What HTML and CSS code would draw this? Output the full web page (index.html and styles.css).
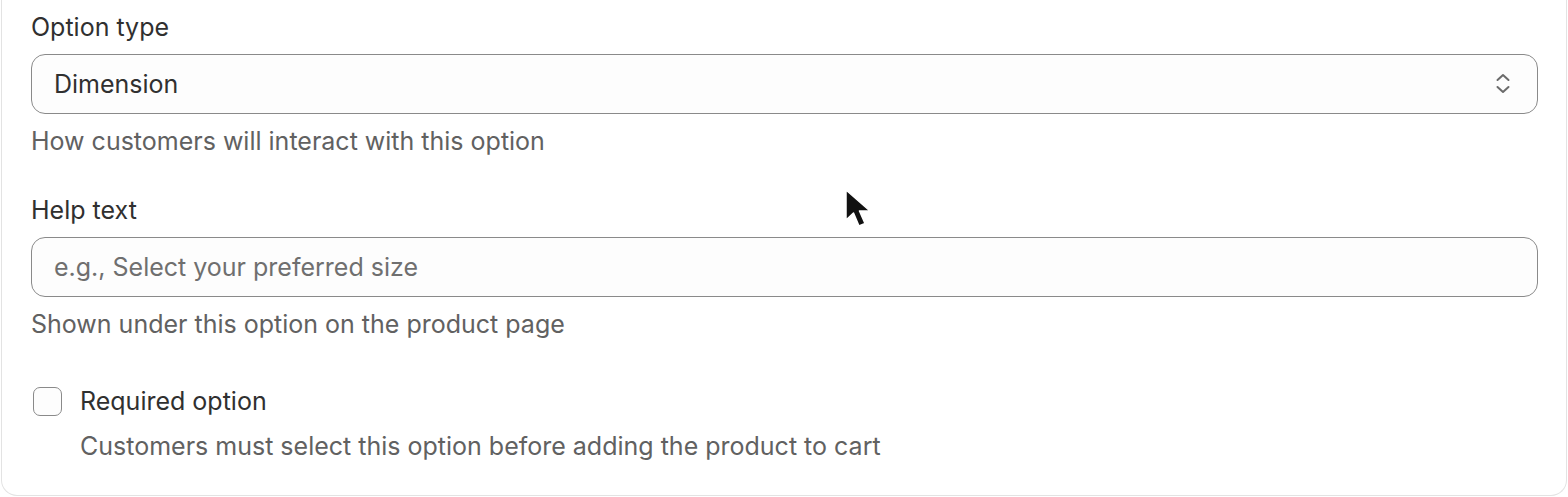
FILE: index.html
```html
<!DOCTYPE html>
<html lang="en">
<head>
  <meta charset="UTF-8">
  <meta name="viewport" content="width=device-width, initial-scale=1.0">
  <title>Option settings</title>
  <link rel="stylesheet" href="styles.css">
</head>
<body>

  <div class="card">
    <div class="field">
      <label class="field-label" for="option-type">Option type</label>
      <div class="select-wrap">
        <select id="option-type" class="select">
          <option>Dimension</option>
        </select>
        <svg class="select-icon" width="16" height="24" viewBox="0 0 16 24" fill="none" stroke="#6b6b6b" stroke-width="2" stroke-linecap="round" stroke-linejoin="round">
          <path d="M2.5 8 L8 3 L13.5 8"/>
          <path d="M2.5 15 L8 20 L13.5 15"/>
        </svg>
      </div>
      <div class="field-help">How customers will interact with this option</div>
    </div>

    <div class="field">
      <label class="field-label" for="help-text">Help text</label>
      <input id="help-text" class="text-input" type="text" placeholder="e.g., Select your preferred size">
      <div class="field-help">Shown under this option on the product page</div>
    </div>

    <div class="check-row">
      <span class="checkbox"></span>
      <div class="check-text">
        <div class="check-label">Required option</div>
        <div class="check-help">Customers must select this option before adding the product to cart</div>
      </div>
    </div>
  </div>

  <!-- mouse pointer over the form -->
  <svg class="cursor" width="32" height="46" viewBox="0 0 32 46">
    <path d="M1 1 L1 31 L8.5 24 L14 37 L20 34.5 L14.5 22 L25 22 Z" fill="#111" stroke="#fff" stroke-width="1.5" stroke-linejoin="round"/>
  </svg>

</body>
</html>
```

FILE: styles.css
```css
body {
  margin: 0;
  font-family: Inter, "Noto Sans", Arial, sans-serif;
  background-color: #ffffff;
  color: #303030;
}

.card {
  margin: 0 1px;
  height: 496px;
  box-sizing: border-box;
  padding: 12px 28px 0 29px;
  background-color: #fff;
  border: 1px solid #e3e3e3;
  border-top: none;
  border-radius: 0 0 16px 16px;
}

.field {
  margin-bottom: 39px;
}

.field-label {
  display: block;
  font-size: 25px;
  line-height: 30px;
  margin-bottom: 12px;
}

.select-wrap {
  position: relative;
}

.select,
.text-input {
  display: block;
  width: 100%;
  height: 60px;
  box-sizing: border-box;
  padding: 0 22px;
  border: 1px solid #8a8a8a;
  border-radius: 14px;
  background-color: #fdfdfd;
  font-family: inherit;
  font-size: 25px;
  color: #303030;
  appearance: none;
  outline: none;
}

.text-input::placeholder {
  color: #6f6f6f;
}

.select-icon {
  position: absolute;
  right: 27px;
  top: 18px;
  pointer-events: none;
}

.field-help {
  margin-top: 12px;
  font-size: 25px;
  line-height: 30px;
  color: #616161;
}

.check-row {
  display: flex;
  align-items: flex-start;
  margin-top: 47px;
}

.checkbox {
  width: 27px;
  height: 27px;
  flex-shrink: 0;
  margin: 1px 18px 0 2px;
  border: 1px solid #8a8a8a;
  border-radius: 7px;
  background-color: #fdfdfd;
}

.check-label {
  font-size: 25px;
  line-height: 30px;
}

.check-help {
  margin-top: 15px;
  font-size: 25px;
  line-height: 30px;
  color: #616161;
}

.cursor {
  position: absolute;
  left: 845px;
  top: 189px;
}
```
